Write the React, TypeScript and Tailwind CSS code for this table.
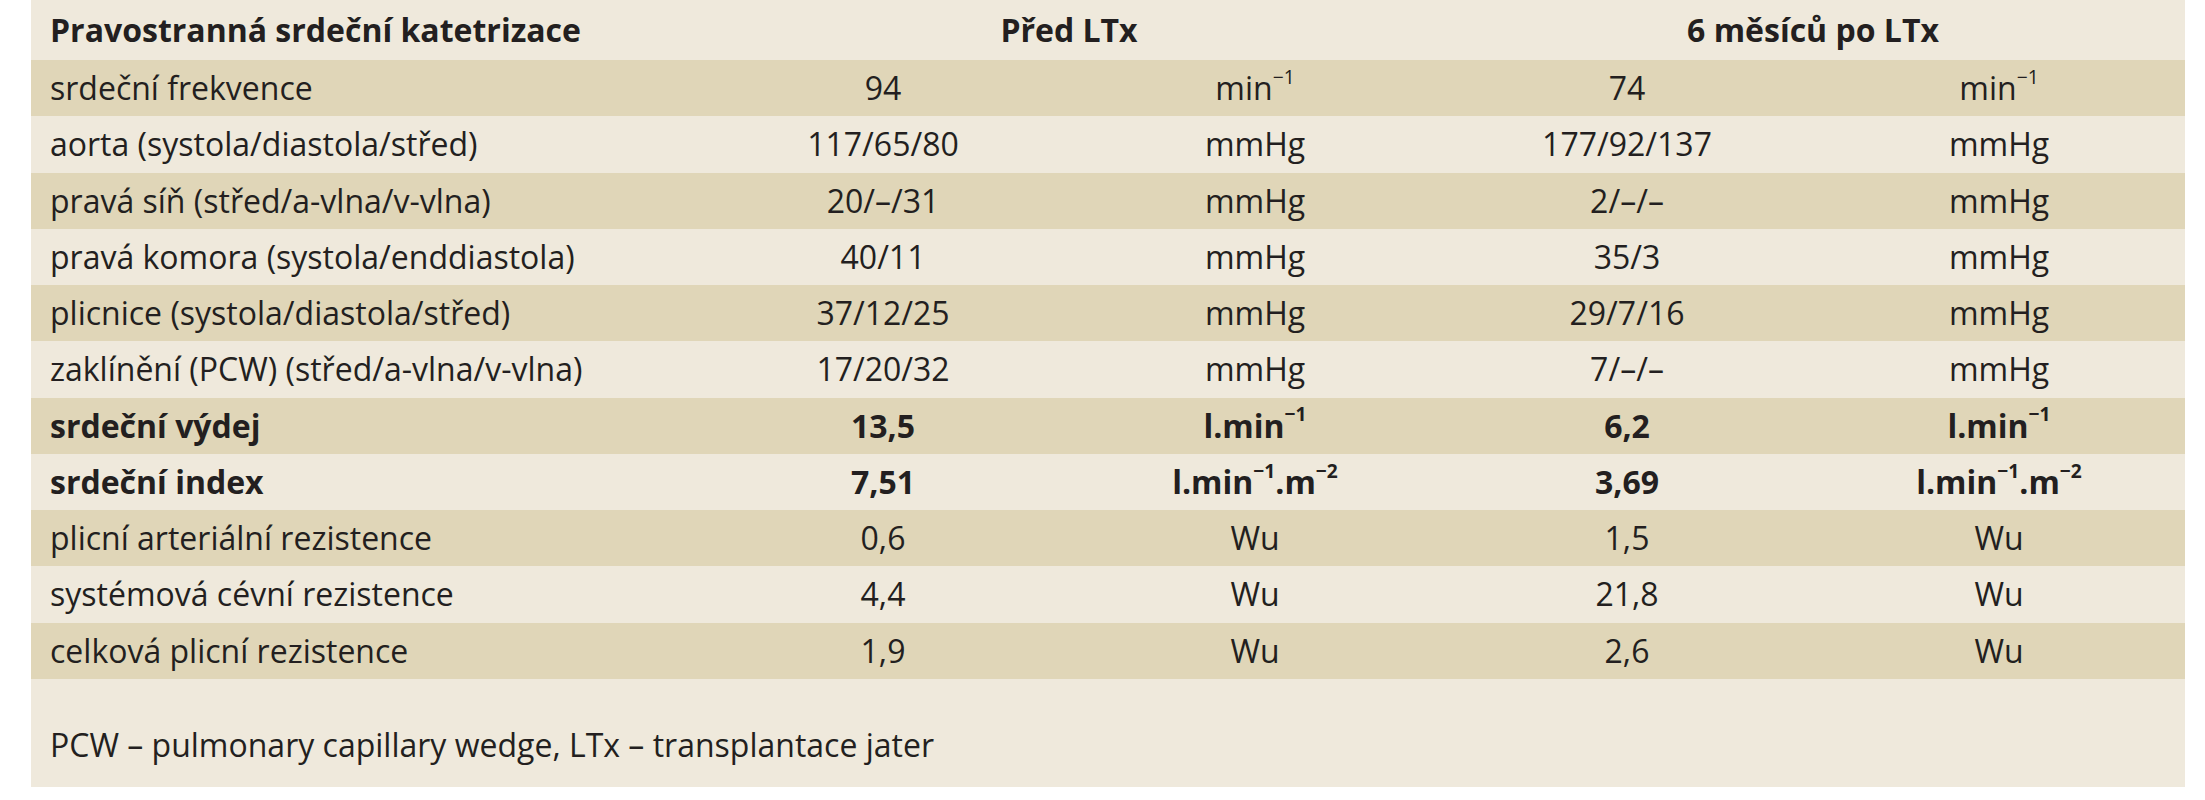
type Row = {
  label: string;
  before: string;
  unit: React.ReactNode;
  after: string;
  bold?: boolean;
};

const Sup = ({ children }: { children: React.ReactNode }) => (
  <sup className="text-[0.6em] relative -top-[0.85em] align-baseline">{children}</sup>
);

const perMin = (
  <>
    min<Sup>−1</Sup>
  </>
);
const lPerMin = (
  <>
    l.min<Sup>−1</Sup>
  </>
);
const lPerMinM2 = (
  <>
    l.min<Sup>−1</Sup>.m<Sup>−2</Sup>
  </>
);

const rows: Row[] = [
  { label: "srdeční frekvence", before: "94", unit: perMin, after: "74" },
  { label: "aorta (systola/diastola/střed)", before: "117/65/80", unit: "mmHg", after: "177/92/137" },
  { label: "pravá síň (střed/a-vlna/v-vlna)", before: "20/–/31", unit: "mmHg", after: "2/–/–" },
  { label: "pravá komora (systola/enddiastola)", before: "40/11", unit: "mmHg", after: "35/3" },
  { label: "plicnice (systola/diastola/střed)", before: "37/12/25", unit: "mmHg", after: "29/7/16" },
  { label: "zaklínění (PCW) (střed/a-vlna/v-vlna)", before: "17/20/32", unit: "mmHg", after: "7/–/–" },
  { label: "srdeční výdej", before: "13,5", unit: lPerMin, after: "6,2", bold: true },
  { label: "srdeční index", before: "7,51", unit: lPerMinM2, after: "3,69", bold: true },
  { label: "plicní arteriální rezistence", before: "0,6", unit: "Wu", after: "1,5" },
  { label: "systémová cévní rezistence", before: "4,4", unit: "Wu", after: "21,8" },
  { label: "celková plicní rezistence", before: "1,9", unit: "Wu", after: "2,6" },
];

const grid = "grid grid-cols-[666px_372px_372px_372px_372px]";

export default function App() {
  return (
    <div className="bg-white w-[2205px] h-[800px] pl-[31px] font-['Open_Sans',sans-serif] text-[#231f20] text-[32px] leading-none">
      <div className="w-[2154px] bg-[#efe9dc]">
        {/* header */}
        <div className={`${grid} h-[60px] items-center font-bold`}>
          <div className="pl-[19px]">Pravostranná srdeční katetrizace</div>
          <div className="col-span-2 text-center">Před LTx</div>
          <div className="col-span-2 text-center">6 měsíců po LTx</div>
        </div>

        {rows.map((r, i) => (
          <div
            key={r.label}
            className={`${grid} h-[56.25px] items-center ${i % 2 === 0 ? "bg-[#e0d6b8]" : "bg-[#efe9dc]"} ${r.bold ? "font-bold" : ""}`}
          >
            <div className="pl-[19px] whitespace-nowrap">{r.label}</div>
            <div className="text-center">{r.before}</div>
            <div className="text-center">{r.unit}</div>
            <div className="text-center">{r.after}</div>
            <div className="text-center">{r.unit}</div>
          </div>
        ))}

        {/* footnote */}
        <div className="h-[108px] pl-[19px] pt-[50px]">
          PCW – pulmonary capillary wedge, LTx – transplantace jater
        </div>
      </div>
    </div>
  );
}
